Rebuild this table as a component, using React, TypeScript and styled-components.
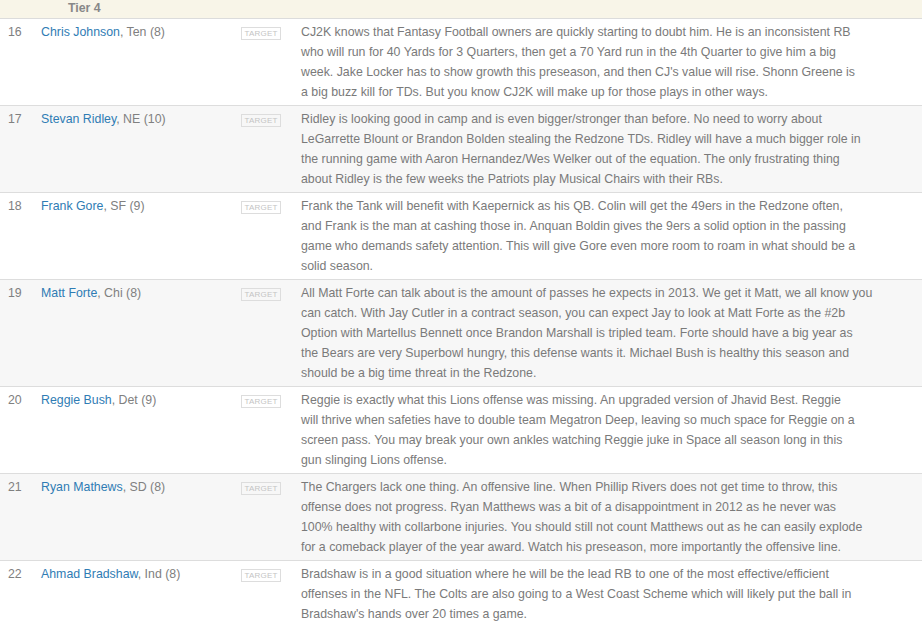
import styled, { createGlobalStyle } from "styled-components";

const GlobalStyle = createGlobalStyle`
  html, body {
    margin: 0;
    padding: 0;
    background: #ffffff;
  }
  body {
    font-family: "Liberation Sans", Arial, sans-serif;
    font-size: 12.35px;
    color: #777777;
  }
`;

const Rankings = styled.section`
  width: 922px;
  overflow: hidden;
`;

const TierHeader = styled.div`
  display: grid;
  grid-template-columns: 60px 1fr;
  height: 18px;
  background-color: #f8f5e8;
  border-bottom: 1px solid #dcdcdc;
  > span {
    grid-column: 2;
    font-weight: bold;
    color: #888888;
    line-height: 17px;
    padding-left: 8px;
  }
`;

const Row = styled.div<{ $alt: boolean }>`
  display: grid;
  grid-template-columns: 33px 200px 60px 1fr;
  padding: 3px 0 3px 8px;
  background-color: ${(p) => (p.$alt ? "#f7f7f7" : "#ffffff")};
  border-bottom: 1px solid #dddddd;
  line-height: 20px;
`;

const Rank = styled.div`
  color: #808080;
`;

const Player = styled.div`
  color: #808080;
  > a {
    color: #2f7cb4;
    text-decoration: none;
  }
`;

const BadgeCell = styled.div`
  padding-top: 5px;
`;

const Badge = styled.span`
  display: block;
  width: 38px;
  height: 11px;
  border: 1px solid #dddddd;
  font-size: 8px;
  line-height: 11px;
  text-align: center;
  color: #c4c4c4;
  letter-spacing: 0.2px;
`;

const Blurb = styled.div`
  color: #7a7a7a;
  > span {
    display: block;
    white-space: nowrap;
  }
`;

const players = [
  {
    rank: 16,
    name: "Chris Johnson",
    team: "Ten (8)",
    lines: [
      "CJ2K knows that Fantasy Football owners are quickly starting to doubt him. He is an inconsistent RB",
      "who will run for 40 Yards for 3 Quarters, then get a 70 Yard run in the 4th Quarter to give him a big",
      "week. Jake Locker has to show growth this preseason, and then CJ's value will rise. Shonn Greene is",
      "a big buzz kill for TDs. But you know CJ2K will make up for those plays in other ways.",
    ],
  },
  {
    rank: 17,
    name: "Stevan Ridley",
    team: "NE (10)",
    lines: [
      "Ridley is looking good in camp and is even bigger/stronger than before. No need to worry about",
      "LeGarrette Blount or Brandon Bolden stealing the Redzone TDs. Ridley will have a much bigger role in",
      "the running game with Aaron Hernandez/Wes Welker out of the equation. The only frustrating thing",
      "about Ridley is the few weeks the Patriots play Musical Chairs with their RBs.",
    ],
  },
  {
    rank: 18,
    name: "Frank Gore",
    team: "SF (9)",
    lines: [
      "Frank the Tank will benefit with Kaepernick as his QB. Colin will get the 49ers in the Redzone often,",
      "and Frank is the man at cashing those in. Anquan Boldin gives the 9ers a solid option in the passing",
      "game who demands safety attention. This will give Gore even more room to roam in what should be a",
      "solid season.",
    ],
  },
  {
    rank: 19,
    name: "Matt Forte",
    team: "Chi (8)",
    lines: [
      "All Matt Forte can talk about is the amount of passes he expects in 2013. We get it Matt, we all know you",
      "can catch. With Jay Cutler in a contract season, you can expect Jay to look at Matt Forte as the #2b",
      "Option with Martellus Bennett once Brandon Marshall is tripled team. Forte should have a big year as",
      "the Bears are very Superbowl hungry, this defense wants it. Michael Bush is healthy this season and",
      "should be a big time threat in the Redzone.",
    ],
  },
  {
    rank: 20,
    name: "Reggie Bush",
    team: "Det (9)",
    lines: [
      "Reggie is exactly what this Lions offense was missing. An upgraded version of Jhavid Best. Reggie",
      "will thrive when safeties have to double team Megatron Deep, leaving so much space for Reggie on a",
      "screen pass. You may break your own ankles watching Reggie juke in Space all season long in this",
      "gun slinging Lions offense.",
    ],
  },
  {
    rank: 21,
    name: "Ryan Mathews",
    team: "SD (8)",
    lines: [
      "The Chargers lack one thing. An offensive line. When Phillip Rivers does not get time to throw, this",
      "offense does not progress. Ryan Matthews was a bit of a disappointment in 2012 as he never was",
      "100% healthy with collarbone injuries. You should still not count Matthews out as he can easily explode",
      "for a comeback player of the year award. Watch his preseason, more importantly the offensive line.",
    ],
  },
  {
    rank: 22,
    name: "Ahmad Bradshaw",
    team: "Ind (8)",
    lines: [
      "Bradshaw is in a good situation where he will be the lead RB to one of the most effective/efficient",
      "offenses in the NFL. The Colts are also going to a West Coast Scheme which will likely put the ball in",
      "Bradshaw's hands over 20 times a game.",
    ],
  },
];

const App = () => {
  return (
    <Rankings>
      <GlobalStyle />
      <TierHeader>
        <span>Tier 4</span>
      </TierHeader>
      {players.map((p, i) => (
        <Row key={p.rank} $alt={i % 2 === 1}>
          <Rank>{p.rank}</Rank>
          <Player>
            <a href="#">{p.name}</a>, {p.team}
          </Player>
          <BadgeCell>
            <Badge>TARGET</Badge>
          </BadgeCell>
          <Blurb>
            {p.lines.map((line) => (
              <span key={line}>{line}</span>
            ))}
          </Blurb>
        </Row>
      ))}
    </Rankings>
  );
};

export default App;
